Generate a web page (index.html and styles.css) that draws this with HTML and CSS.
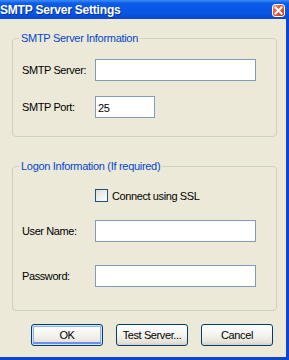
FILE: index.html
```html
<!DOCTYPE html>
<html lang="en">
<head>
  <meta charset="UTF-8" />
  <title>SMTP Server Settings</title>
  <link rel="stylesheet" href="styles.css">
</head>
<body>
  <div class="window">
    <div class="titlebar">
      <span class="title">SMTP Server Settings</span>
      <span class="close">
        <svg width="11" height="11" viewBox="0 0 11 11">
          <path d="M2.5 2.5 L8.5 8.5 M8.5 2.5 L2.5 8.5" stroke="#fff" stroke-width="2" stroke-linecap="square" />
        </svg>
      </span>
    </div>

    <div class="client">
      <fieldset class="group group-server">
        <legend>SMTP Server Information</legend>
        <div class="row">
          <label for="server">SMTP Server:</label>
          <input type="text" id="server" class="field field-wide" />
        </div>
        <div class="row row-port">
          <label for="port">SMTP Port:</label>
          <input type="text" id="port" class="field field-port" value="25" />
        </div>
      </fieldset>

      <fieldset class="group group-logon">
        <legend>Logon Information (If required)</legend>
        <div class="row row-ssl">
          <input type="checkbox" id="ssl" class="check" />
          <label for="ssl" class="check-label">Connect using SSL</label>
        </div>
        <div class="row row-user">
          <label for="user">User Name:</label>
          <input type="text" id="user" class="field field-wide" />
        </div>
        <div class="row row-pass">
          <label for="pass">Password:</label>
          <input type="password" id="pass" class="field field-wide" />
        </div>
      </fieldset>

      <div class="buttons">
        <button class="btn btn-default">OK</button>
        <button class="btn">Test Server...</button>
        <button class="btn">Cancel</button>
      </div>
    </div>
  </div>
</body>
</html>
```

FILE: styles.css
```css
* {
  box-sizing: border-box;
}
body {
  margin: 0;
  width: 289px;
  height: 360px;
  overflow: hidden;
  font-family: 'Liberation Sans', Arial, sans-serif;
  font-size: 11px;
  letter-spacing: -0.4px;
  color: #000;
  background: #ece9d8;
}
.window {
  display: flex;
  flex-direction: column;
  width: 289px;
  height: 360px;
}
.titlebar {
  height: 19px;
  display: flex;
  justify-content: space-between;
  align-items: flex-start;
  padding: 0 4px 0 0;
  background: linear-gradient(to bottom, #3c8cf6 0%, #0b5ae8 18%, #0856e2 70%, #0748cf 100%);
}
.title {
  color: #fff;
  font-weight: bold;
  font-size: 12px;
  letter-spacing: -0.2px;
  line-height: 20px;
  text-shadow: 1px 1px 0 #0a2d9c;
}
.close {
  margin-top: 4px;
  width: 13px;
  height: 13px;
  border: 1px solid #fff;
  border-radius: 3px;
  background: linear-gradient(135deg, #f29a7a 0%, #e35a36 40%, #cc3f1c 100%);
  display: flex;
  align-items: center;
  justify-content: center;
}
.client {
  flex: 1;
  display: flex;
  flex-direction: column;
  padding: 13px 9px 0 12px;
  border-right: 3px solid #0c44d4;
  border-bottom: 3px solid #0c44d4;
}
.group {
  margin: 0;
  padding: 14px 9px 18px 9px;
  border: 1px solid #d0d0bf;
  border-radius: 4px;
}
.group legend {
  padding: 0 2px;
  margin-left: -3px;
  color: #0046d5;
  line-height: 13px;
  letter-spacing: -0.3px;
}
.group-logon {
  margin-top: 23px;
  padding-top: 16px;
  padding-bottom: 23px;
}
.row {
  display: flex;
  align-items: center;
}
.row label {
  width: 73px;
  flex-shrink: 0;
}
.row-port {
  margin-top: 15px;
}
.row-ssl {
  padding-left: 73px;
}
.row-user {
  margin-top: 18px;
}
.row-pass {
  margin-top: 23px;
}
.field {
  height: 22px;
  margin: 0;
  padding: 1px 2px 0;
  border: 1px solid #7f9db9;
  background: #fff;
  font: inherit;
  letter-spacing: inherit;
  outline: none;
}
.field-wide {
  width: 161px;
}
.field-port {
  width: 60px;
}
.check {
  appearance: none;
  width: 13px;
  height: 13px;
  margin: 0;
  border: 1px solid #1c5180;
  background: linear-gradient(135deg, #dcdcd7 0%, #f3f3f0 60%, #ffffff 100%);
}
.row .check-label {
  width: auto;
  margin-left: 4px;
}
.buttons {
  display: flex;
  justify-content: flex-end;
  gap: 13px;
  margin-top: 13px;
  padding-right: 4px;
}
.btn {
  width: 72px;
  height: 22px;
  margin: 0;
  padding: 0;
  border: 1px solid #003c74;
  border-radius: 3px;
  background: linear-gradient(to bottom, #ffffff 0%, #f4f3ee 50%, #e6e3d8 85%, #d6d0c5 100%);
  font: inherit;
  letter-spacing: inherit;
  color: #000;
}
.btn-default {
  box-shadow: inset 0 0 0 1px #cee7ff, inset 0 -2px 0 1px #6d8ef0, inset 0 0 0 2px #8cb0f0;
}
```
